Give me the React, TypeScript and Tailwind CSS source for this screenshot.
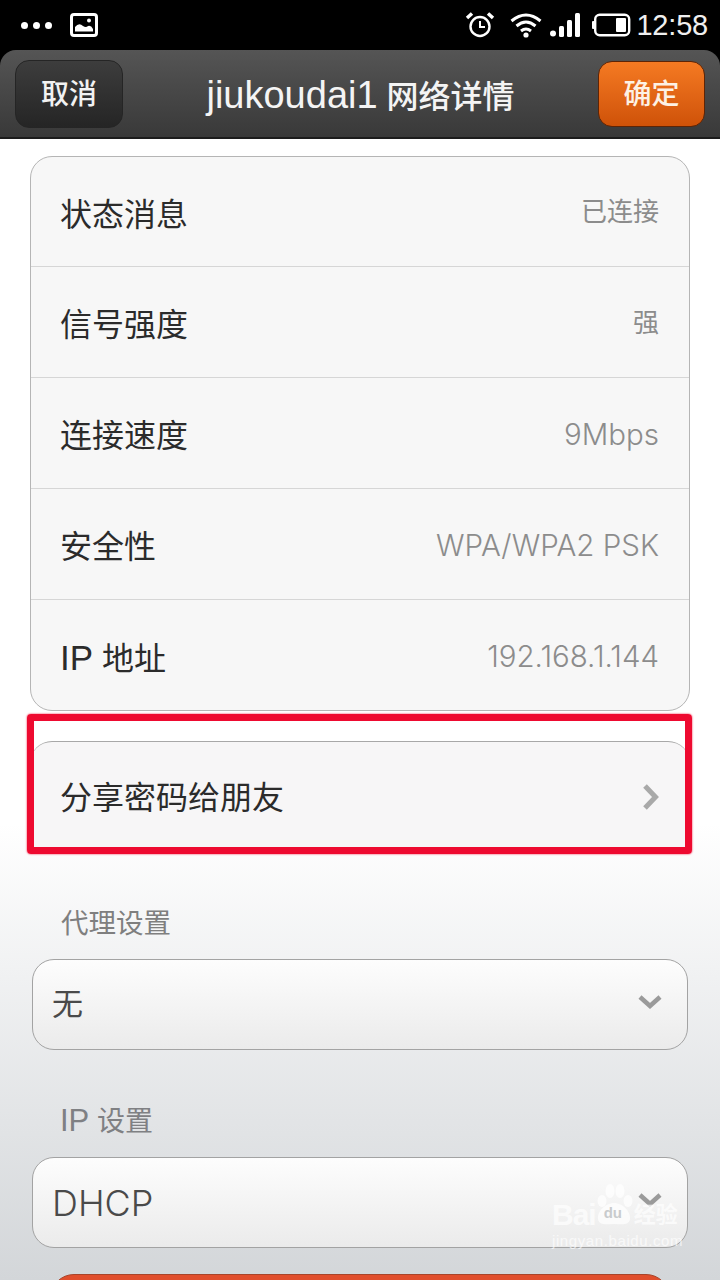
const font = { fontFamily: '"Liberation Sans", "Noto Sans CJK SC", sans-serif' };
const thin = { fontFamily: 'Inter, "Noto Sans CJK SC", sans-serif' };

function Row({ label, value, h, latin, border = true }: { label: React.ReactNode; value: string; h: string; latin?: boolean; border?: boolean }) {
  return (
    <div className={`flex items-center justify-between pl-[29px] pr-[30px] ${h} ${border ? "border-b border-[#d6d6d6]" : ""}`}>
      <span className="translate-y-[3px] text-[32px] text-[#2b2b2b]">{label}</span>
      <span style={latin ? thin : undefined} className={`translate-y-[1px] text-[#8c8c8c] ${latin ? "text-[29.5px] font-light" : "text-[26px]"}`}>{value}</span>
    </div>
  );
}

function Select({ value, latin }: { value: string; latin?: boolean }) {
  return (
    <div className="mx-[32px] flex h-[91px] items-center justify-between rounded-[22px] border border-[#a3a3a3] bg-gradient-to-b from-[#fdfdfd] to-[#ebebeb] pl-[19px] pr-[25px]">
      <span style={latin ? thin : undefined} className={`leading-none text-[#4a4a4a] ${latin ? "text-[36px] font-light" : "text-[31px]"}`}>{value}</span>
      <svg width="24" height="14" viewBox="0 0 24 14" fill="none" stroke="#9a9a9a" strokeWidth="4.5" className="-translate-y-[3px]">
        <path d="M2 2 L12 11 L22 2" />
      </svg>
    </div>
  );
}

export default function App() {
  return (
    <div style={font} className="relative h-[1280px] w-[720px] overflow-hidden bg-black">
      {/* status bar */}
      <div className="flex h-[50px] items-center pl-[21px] pr-[12px] text-white">
        <div className="flex gap-[5px]">
          <span className="h-[7px] w-[7px] rounded-full bg-white" />
          <span className="h-[7px] w-[7px] rounded-full bg-white" />
          <span className="h-[7px] w-[7px] rounded-full bg-white" />
        </div>
        <svg width="28" height="24" viewBox="0 0 28 24" className="ml-[18px]">
          <rect x="1.500" y="1.500" width="25" height="21" rx="2.500" fill="none" stroke="#fff" strokeWidth="3" />
          <path d="M5 18.500 V14 Q9 9 13 13 Q16 15 18 13 Q21 12 23 16 V18.500 Z" fill="#fff" />
          <circle cx="19" cy="7.500" r="2" fill="#fff" />
        </svg>
        <div className="flex-1" />
        <svg width="30" height="26" viewBox="0 0 30 26" fill="none" stroke="#fff" className="mr-[15px]">
          <circle cx="15" cy="14.500" r="9.500" strokeWidth="2.400" />
          <path d="M15 9 V15 H20" strokeWidth="2" />
          <path d="M2 6 L7 1.500 M28 6 L23 1.500" strokeWidth="3.500" />
        </svg>
        <svg width="32" height="26" viewBox="0 0 32 26" fill="none" stroke="#fff" strokeWidth="3" className="mr-[8px]">
          <path d="M1.500 9 Q16 -3 30.500 9" />
          <path d="M6.500 14 Q16 6 25.500 14" />
          <path d="M11 19 Q16 15 21 19" />
          <circle cx="16" cy="23" r="2.600" fill="#fff" stroke="none" />
        </svg>
        <svg width="30" height="24" viewBox="0 0 30 24" fill="#fff" className="mr-[12px]">
          <circle cx="3" cy="20.500" r="3" />
          <rect x="9" y="13" width="5" height="11" rx="1.500" />
          <rect x="17" y="7" width="5" height="17" rx="1.500" />
          <rect x="25" y="0" width="5" height="24" rx="1.500" />
        </svg>
        <svg width="39" height="24" viewBox="0 0 39 24" className="mr-[5px]">
          <rect x="3.200" y="1.700" width="34" height="20.600" rx="4.500" fill="none" stroke="#fff" strokeWidth="2.400" />
          <rect x="0" y="8" width="2.500" height="8" rx="1" fill="#fff" />
          <rect x="24" y="5" width="10" height="14" rx="1" fill="#fff" />
        </svg>
        <span className="text-[29px] leading-none tracking-[-0.2px] text-[#efefef]">12:58</span>
      </div>

      {/* header */}
      <div className="flex h-[89px] items-center justify-between rounded-t-[16px] border-b-2 border-[#1c1c1c] bg-gradient-to-b from-[#555555] to-[#393939] pl-[15px] pr-[15px]">
        <div className="flex h-[68px] w-[108px] items-center justify-center rounded-[14px] border border-[#252525] bg-gradient-to-b from-[#3d3d3d] to-[#252525] text-[28px] font-medium text-[#f2f2f2]">
          <span className="translate-y-[1px]">取消</span>
        </div>
        <span className="translate-y-[2px] text-[32px] font-medium text-[#f4f4f4]">
          <span className="text-[38px] font-normal">jiukoudai1</span> 网络详情
        </span>
        <div className="flex h-[66px] w-[107px] items-center justify-center rounded-[14px] border border-[#5e2405] bg-gradient-to-b from-[#f57a22] to-[#cf5208] text-[28px] font-medium text-[#fdf1e4]">
          <span className="translate-y-[1px]">确定</span>
        </div>
      </div>

      {/* content */}
      <div className="h-[1141px] bg-gradient-to-b from-white from-[60%] to-[#d3d6d9] pt-[17px]">
        <div className="mx-[30px] rounded-[22px] border border-[#b5b5b5] bg-[#f7f7f7]">
          <Row h="h-[110px]" label="状态消息" value="已连接" />
          <Row h="h-[111px]" label="信号强度" value="强" />
          <Row h="h-[111px]" label="连接速度" value="9Mbps" latin />
          <Row h="h-[111px]" label="安全性" value="WPA/WPA2 PSK" latin />
          <Row h="h-[110px]" label={<><span className="text-[35px]">IP</span> 地址</>} value="192.168.1.144" latin border={false} />
        </div>

        <div className="mx-[30px] mt-[30px] flex h-[112px] items-center justify-between rounded-t-[22px] border-t border-[#a8a8a8] bg-[#f7f6f7] pl-[30px] pr-[29px]">
          <span className="text-[32px] text-[#2b2b2b]">分享密码给朋友</span>
          <svg width="17" height="26" viewBox="0 0 17 26" fill="none" stroke="#a9a9a9" strokeWidth="5" className="-translate-x-[2px] -translate-y-[1px]">
            <path d="M3 2 L13.500 13 L3 24" />
          </svg>
        </div>

        <div className="mt-[48px] ml-[61px] h-[44px] translate-y-[1px] text-[27.500px] leading-[44px] text-[#7f7f7f]">代理设置</div>
        <div className="mt-[14px]"><Select value="无" /></div>
        <div className="mt-[49px] ml-[60px] h-[44px] text-[28px] leading-[44px] text-[#7f8083]"><span className="text-[31px]">IP</span> 设置</div>
        <div className="mt-[14px]"><Select value="DHCP" latin /></div>
        <div className="mx-[50px] mt-[26px] h-[60px] rounded-t-[24px] border border-[#a8442a] bg-[#e04e2c]" />
      </div>

      {/* red highlight annotation */}
      <div className="absolute left-[27px] top-[714px] h-[140px] w-[665px] rounded-[4px] border-[7px] border-[#ee0a30] shadow-[0_0_2px_#ee0a30]" />

      {/* watermark */}
      <div className="absolute left-[552px] top-[1200px] flex w-[165px] flex-col items-start text-white/70">
        <div className="flex items-center">
          <span className="text-[30px] font-bold leading-none tracking-[-1px]">Bai</span>
          <div className="relative -mt-[22px] -mx-[1px] h-[50px] w-[38px]">
            <svg width="38" height="50" viewBox="0 0 38 50" fill="#ffffff" fillOpacity="0.72">
              <ellipse cx="7" cy="22" rx="4.500" ry="6" />
              <ellipse cx="15" cy="12" rx="4.500" ry="7" />
              <ellipse cx="25" cy="12" rx="4.500" ry="7" />
              <ellipse cx="33" cy="22" rx="4.500" ry="6" />
              <path d="M19 24 C28 24 36 33 35 40 C34 47 26 45 19 45 C12 45 4 47 3 40 C2 33 10 24 19 24 Z" />
            </svg>
            <span className="absolute left-[9px] top-[26px] text-[15px] font-bold leading-none text-[#c9cbcd]">du</span>
          </div>
          <span className="ml-[2px] text-[22px] font-bold leading-none">经验</span>
        </div>
        <span className="mt-[3px] text-[15px] leading-none tracking-[0.6px] text-white/65">jingyan.baidu.com</span>
      </div>
    </div>
  );
}
